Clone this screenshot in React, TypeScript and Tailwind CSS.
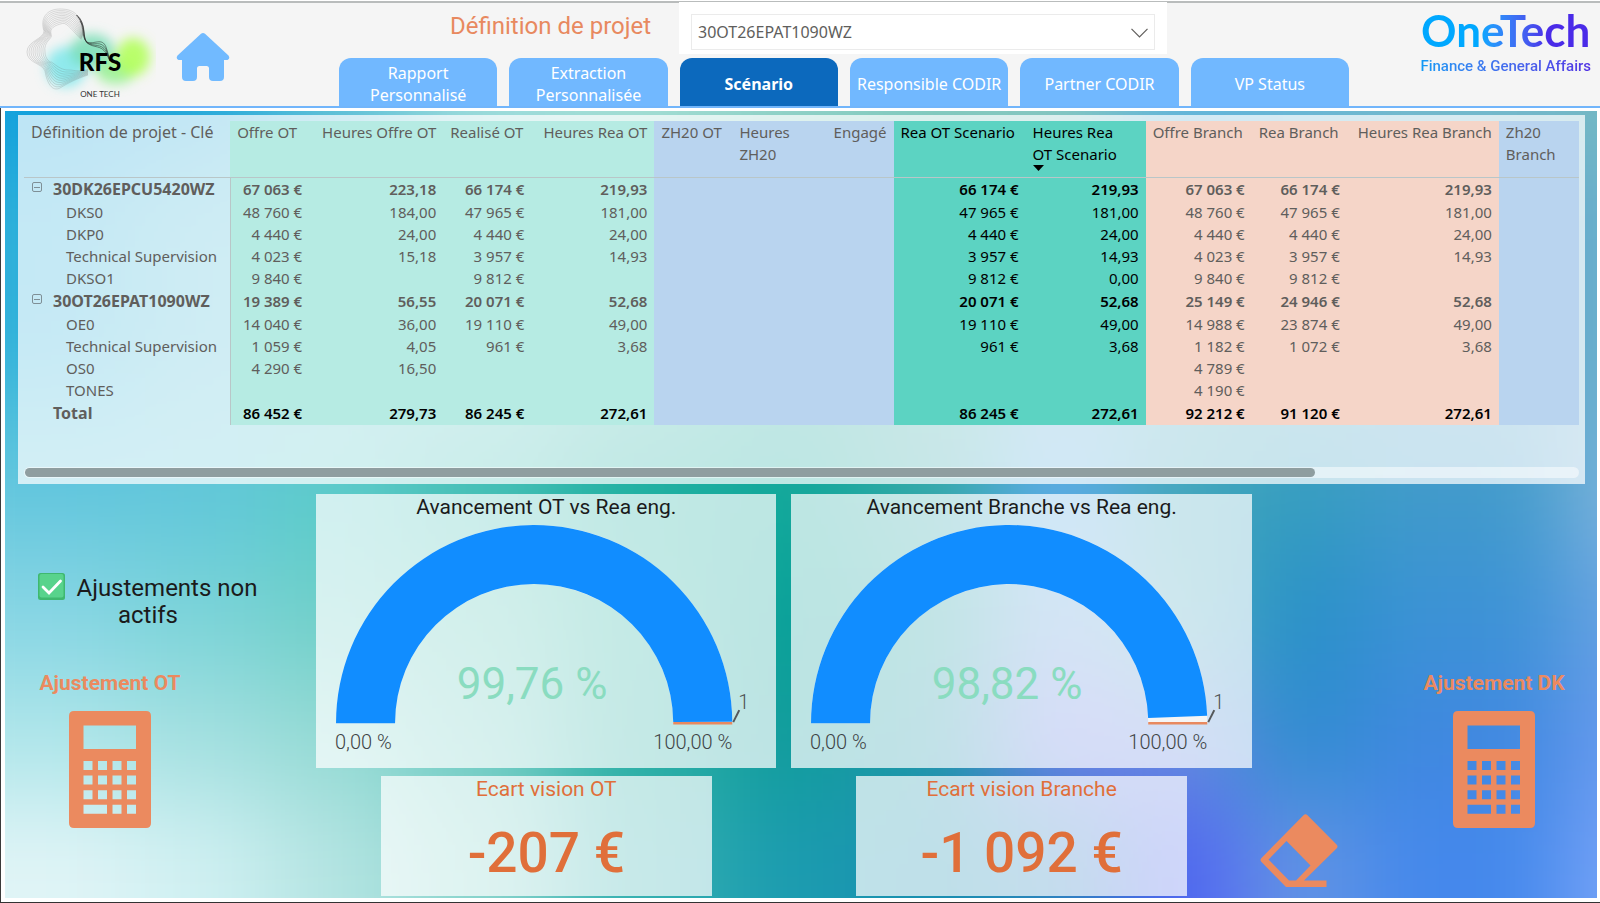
import { useState } from 'react';
import { clsx } from 'clsx';

type Tone = 'plain' | 'mint' | 'blue' | 'teal' | 'salmon';

interface Column {
  label: string;
  tone: Tone;
  col: string;
  align?: 'right';
  wrap?: boolean;
  sorted?: boolean;
}

interface Row {
  label: string;
  level: 'group' | 'item' | 'total';
  cells: string[];
}

const TABS = [
  'Rapport Personnalisé',
  'Extraction Personnalisée',
  'Scénario',
  'Responsible CODIR',
  'Partner CODIR',
  'VP Status',
];

const COLUMNS: Column[] = [
  { label: 'Définition de projet - Clé', tone: 'plain', col: 'w-[206px]' },
  { label: 'Offre OT', tone: 'mint', col: 'w-[79px]' },
  { label: 'Heures Offre OT', tone: 'mint', col: 'w-[134px]', align: 'right' },
  { label: 'Realisé OT', tone: 'mint', col: 'w-[88px]' },
  { label: 'Heures Rea OT', tone: 'mint', col: 'w-[123px]', align: 'right' },
  { label: 'ZH20 OT', tone: 'blue', col: 'w-[78px]' },
  { label: 'Heures ZH20', tone: 'blue', col: 'w-[91px]', wrap: true },
  { label: 'Engagé', tone: 'blue', col: 'w-[70px]', align: 'right' },
  { label: 'Rea OT Scenario', tone: 'teal', col: 'w-[132px]' },
  { label: 'Heures Rea OT Scenario', tone: 'teal', col: 'w-[120px]', wrap: true, sorted: true },
  { label: 'Offre Branch', tone: 'salmon', col: 'w-[106px]' },
  { label: 'Rea Branch', tone: 'salmon', col: 'w-[95px]' },
  { label: 'Heures Rea Branch', tone: 'salmon', col: 'w-[152px]', align: 'right' },
  { label: 'Zh20 Branch', tone: 'blue', col: 'w-[80px]', wrap: true },
];

const ROWS: Row[] = [
  {
    label: '30DK26EPCU5420WZ',
    level: 'group',
    cells: ['67 063 €', '223,18', '66 174 €', '219,93', '', '', '', '66 174 €', '219,93', '67 063 €', '66 174 €', '219,93', ''],
  },
  {
    label: 'DKS0',
    level: 'item',
    cells: ['48 760 €', '184,00', '47 965 €', '181,00', '', '', '', '47 965 €', '181,00', '48 760 €', '47 965 €', '181,00', ''],
  },
  {
    label: 'DKP0',
    level: 'item',
    cells: ['4 440 €', '24,00', '4 440 €', '24,00', '', '', '', '4 440 €', '24,00', '4 440 €', '4 440 €', '24,00', ''],
  },
  {
    label: 'Technical Supervision',
    level: 'item',
    cells: ['4 023 €', '15,18', '3 957 €', '14,93', '', '', '', '3 957 €', '14,93', '4 023 €', '3 957 €', '14,93', ''],
  },
  {
    label: 'DKSO1',
    level: 'item',
    cells: ['9 840 €', '', '9 812 €', '', '', '', '', '9 812 €', '0,00', '9 840 €', '9 812 €', '', ''],
  },
  {
    label: '30OT26EPAT1090WZ',
    level: 'group',
    cells: ['19 389 €', '56,55', '20 071 €', '52,68', '', '', '', '20 071 €', '52,68', '25 149 €', '24 946 €', '52,68', ''],
  },
  {
    label: 'OE0',
    level: 'item',
    cells: ['14 040 €', '36,00', '19 110 €', '49,00', '', '', '', '19 110 €', '49,00', '14 988 €', '23 874 €', '49,00', ''],
  },
  {
    label: 'Technical Supervision',
    level: 'item',
    cells: ['1 059 €', '4,05', '961 €', '3,68', '', '', '', '961 €', '3,68', '1 182 €', '1 072 €', '3,68', ''],
  },
  {
    label: 'OS0',
    level: 'item',
    cells: ['4 290 €', '16,50', '', '', '', '', '', '', '', '4 789 €', '', '', ''],
  },
  {
    label: 'TONES',
    level: 'item',
    cells: ['', '', '', '', '', '', '', '', '', '4 190 €', '', '', ''],
  },
  {
    label: 'Total',
    level: 'total',
    cells: ['86 452 €', '279,73', '86 245 €', '272,61', '', '', '', '86 245 €', '272,61', '92 212 €', '91 120 €', '272,61', ''],
  },
];

const TONE_BG: Record<Tone, string> = {
  plain: '',
  mint: 'bg-[#b6ebe3]',
  blue: 'bg-[#b9d4ef]',
  teal: 'bg-[#5cd3c2]',
  salmon: 'bg-[#f5d5c8]',
};

// Colour mesh of the canvas: one row per band, blurred into each other.
const MESH_X = [-100, 130, 270, 410, 560, 715, 860, 995, 1120, 1235, 1360, 1570, 1750];
const MESH_Y = [-100, 160, 380, 460, 560, 680, 800, 1050];
const MESH = [
  '109fdc 20a6da 60c0d8 a4dede b0e2d8 a0d6cc 90cec2 8ccabe 66b6e0 70bad8 78bccc 74b8c0',
  '2eb0da 50bcd8 60c4d4 70cccc 50c0b8 30b4a8 30b0a8 60b4c8 40aac0 48a4c4 58a8cc 70b0cc',
  '50c0dc 60c4d8 60c8ce 50c4bc 30b4a8 18a89c 40aca8 64aee0 50aec0 40a4c0 48a0c8 7cb6d4',
  '68c8de 62c8da 5accc8 40bdb4 1cafa0 10a89a 30a8a8 5aacec 40a6b8 349cc0 4099cc 84b6e0',
  '88d6e4 7cd4d8 70cfc8 60c8b8 2cb4a4 08a098 20a0a0 6aa0e0 50b0bc 2890c8 3c92d6 6ca4e4',
  'b0e6ea a4e0e0 94dad4 70ccc4 2cb0a4 109c9c 2098a8 7480ec 6c8ce0 308cd0 4088e0 6c9cf0',
  'e0f4f6 d0f0f2 b4e4e2 88d4cc 34b0b0 1c9cb0 1890b0 2c84bc 5060f4 6494e4 4488ec 7ca6f8',
].map((line) => line.split(' '));

function Backdrop() {
  return (
    <svg
      className="absolute inset-0 h-full w-full"
      viewBox="5 111 1592 787"
      preserveAspectRatio="none"
      aria-hidden="true"
    >
      <defs>
        <filter
          id="mesh"
          filterUnits="userSpaceOnUse"
          x="-100"
          y="-100"
          width="1850"
          height="1150"
          colorInterpolationFilters="sRGB"
        >
          <feGaussianBlur stdDeviation="48" />
        </filter>
      </defs>
      <g filter="url(#mesh)">
        {MESH.map((line, r) =>
          line.map((color, c) => (
            <rect
              key={`${r}-${c}`}
              x={MESH_X[c]}
              y={MESH_Y[r]}
              width={MESH_X[c + 1] - MESH_X[c] + 1}
              height={MESH_Y[r + 1] - MESH_Y[r] + 1}
              fill={`#${color}`}
            />
          )),
        )}
      </g>
    </svg>
  );
}

const CONTOUR_STEPS = [0, 1, 2, 3, 4, 5, 6, 7, 8, 9];

function RfsLogo() {
  return (
    <svg className="h-[100px] w-[136px] shrink-0" viewBox="20 4 136 100" role="img" aria-label="RFS One Tech">
      <defs>
        <filter id="glow" x="-50%" y="-50%" width="200%" height="200%">
          <feGaussianBlur stdDeviation="6" />
        </filter>
      </defs>
      <g filter="url(#glow)">
        <ellipse cx="66" cy="68" rx="20" ry="20" fill="#6fe6ea" opacity="0.75" />
        <ellipse cx="92" cy="52" rx="22" ry="17" fill="#6fdcb0" opacity="0.8" />
        <ellipse cx="116" cy="72" rx="20" ry="13" fill="#8ff08a" opacity="0.8" />
        <ellipse cx="133" cy="58" rx="17" ry="19" fill="#b4ff5c" opacity="0.9" />
      </g>
      <g fill="none" stroke="#666" strokeWidth="0.3" opacity="0.7">
        {CONTOUR_STEPS.map((i) => (
          <path
            key={i}
            d={`M${83 - i * 0.2} ${36 + i * 0.5}
              C${82 - i} ${18 + i * 1.6} ${76 - i} ${10 + i * 1.5} ${60 + i * 0.3} ${10 + i * 1.6}
              C${46 + i} ${10 + i * 1.8} ${40 + i} ${20 + i} ${44 + i * 0.8} ${32 + i * 0.4}
              C${44 + i} ${40} ${27 + i * 1.8} ${42} ${27 + i * 2} ${53}
              C${27 + i * 2} ${64 - i * 0.4} ${42 + i} ${64} ${45 + i * 0.7} ${72 - i}
              C${47 + i} ${84 - i * 2} ${52 + i} ${93 - i * 2.4} ${60 + i} ${89 - i * 2}
              C${68 + i} ${84 - i * 1.4} ${76} ${80 - i * 0.8} ${88} ${76 - i * 0.6}`}
          />
        ))}
      </g>
      <g fill="none" stroke="#222" strokeWidth="0.5">
        <path d="M76 16C86 24 80 38 87 43C94 46 102 38 106 48C108 54 109 58 110 62" />
        <path d="M77 16C87 25 81 38 87 43.500C94 47 101 41 106 50C108 55 109 58 110 62" />
        <path d="M78 18C87 27 82 38 87 44C94 48 101 44 106 52L110 62" />
        <path d="M80 22C86 30 82 39 88 44.500C94 49 101 46 106 54L110 62" />
      </g>
      <text x="100" y="72" textAnchor="middle" fontFamily="Lato, sans-serif" fontSize="24" fontWeight="900" fill="#000">
        RFS
      </text>
      <text x="100" y="98" textAnchor="middle" fontFamily="Lato, sans-serif" fontSize="8" fill="#333">
        ONE TECH
      </text>
    </svg>
  );
}

function HomeIcon() {
  return (
    <svg className="h-[48px] w-[54px]" viewBox="0 0 54 48" fill="#71baff" aria-hidden="true">
      <path d="M25 .8Q27 -.6 29 .8L52.500 22.500Q54.500 25.500 51.500 27H48V44Q48 48 44 48H37Q33 48 33 44V35.500Q33 33 30.500 33H23.500Q21 33 21 35.500V44Q21 48 17 48H10Q6 48 6 44V27H2.500Q-.5 25.500 1.500 22.500Z" />
    </svg>
  );
}

function Header() {
  const [tab, setTab] = useState('Scénario');

  return (
    <header className="mt-px flex h-[107px] shrink-0 items-stretch border-t-2 border-b-2 border-t-[#b9bcbc] border-b-[#71b5fb] bg-[#f5f5f5]">
      <div className="flex w-[339px] shrink-0 items-start pl-5">
        <RfsLogo />
        <a href="#accueil" aria-label="Accueil" className="mt-[30px] ml-5">
          <HomeIcon />
        </a>
      </div>

      <div className="-mt-px flex min-w-0 flex-[1010] flex-col justify-between">
        <div className="flex h-[52px] items-start pl-[111px]">
          <label
            htmlFor="project"
            className="w-[229px] shrink-0 pt-2 font-['Roboto',sans-serif] text-2xl leading-8 text-[#e8895f]"
          >
            Définition de projet
          </label>
          <div className="h-[52px] w-[488px] shrink-0 bg-white px-3 py-3">
            <div className="relative">
              <select
                id="project"
                className="h-[36px] w-full appearance-none border border-[#ebebeb] bg-white px-[6px] text-base text-[#605e5c]"
              >
                <option>30OT26EPAT1090WZ</option>
                <option>30DK26EPCU5420WZ</option>
              </select>
              <svg
                className="pointer-events-none absolute top-[14px] right-[7px] h-[10px] w-[17px]"
                viewBox="0 0 17 10"
                fill="none"
                stroke="#605e5c"
                strokeWidth="1.2"
                aria-hidden="true"
              >
                <path d="M.5 .8L8.500 9L16.500 .8" />
              </svg>
            </div>
          </div>
        </div>

        <nav className="grid grid-cols-6 gap-3">
          {TABS.map((name) => (
            <button
              key={name}
              type="button"
              onClick={() => setTab(name)}
              className={clsx(
                'flex h-12 items-center justify-center rounded-t-xl pt-1 text-center text-base leading-[22px] text-white',
                name.includes('Personnalis') ? 'px-6' : 'whitespace-nowrap',
                name === tab ? 'bg-[#0c69bd] font-bold' : 'bg-[#71b8ff]',
              )}
            >
              {name}
            </button>
          ))}
        </nav>
      </div>

      <div className="flex min-w-0 flex-[251] justify-end">
        <div className="mr-[9px] flex flex-col items-center pt-px">
          <span className="bg-linear-to-r from-[#00a8ff] from-35% to-[#4a2be8] to-75% bg-clip-text font-['Lato',sans-serif] text-[44px] leading-[53px] font-bold text-transparent">
            OneTech
          </span>
          <span className="bg-linear-to-r from-[#0f9af5] to-[#5130e4] bg-clip-text font-['Roboto',sans-serif] text-[15px] leading-[18px] font-medium text-transparent">
            Finance &amp; General Affairs
          </span>
        </div>
      </div>
    </header>
  );
}

function ScenarioTable() {
  return (
    <section className="bg-white/72 px-[6px] pt-[6px] pb-[6px]">
      <table className="w-full table-fixed border-collapse text-[15px] text-[#605e5c]">
        <colgroup>
          {COLUMNS.map((c) => (
            <col key={c.label} className={c.col} />
          ))}
        </colgroup>
        <thead>
          <tr className="h-[56px] border-b border-[#b9c6c8] align-top leading-[22px]">
            {COLUMNS.map((c) => (
              <th
                key={c.label}
                scope="col"
                className={clsx(
                  'pl-[7px] font-normal',
                  c.sorted ? 'pr-4' : 'pr-[7px]',
                  TONE_BG[c.tone],
                  c.align === 'right' ? 'text-right' : 'text-left',
                  c.tone === 'teal' && 'text-black',
                  c.tone === 'plain' && 'text-base leading-[22px]',
                  !c.wrap && 'whitespace-nowrap',
                )}
              >
                {c.label}
                {c.sorted ? (
                  <svg className="block h-[6px] w-[11px]" viewBox="0 0 11 6" aria-hidden="true">
                    <path d="M0 0H11L5.500 6Z" fill="#000" />
                  </svg>
                ) : null}
              </th>
            ))}
          </tr>
        </thead>
        <tbody>
          {ROWS.map((row, i) => (
            <tr key={i} className={clsx('leading-[22px]', row.level === 'item' ? 'h-[22px]' : 'h-6')}>
              <th
                scope="row"
                className={clsx(
                  'border-r border-[#b9c6c8] text-left whitespace-nowrap',
                  row.level === 'item' ? 'pl-[42px] font-normal' : 'text-base leading-[22px] font-bold',
                  row.level === 'total' && 'pl-[29px]',
                )}
              >
                {row.level === 'group' ? (
                  <span className="flex items-center pl-2">
                    <button
                      type="button"
                      aria-label={`Réduire ${row.label}`}
                      className="mr-[11px] mb-1 flex h-[10px] w-[10px] items-center justify-center rounded-xs border border-[#7f8f96]"
                    >
                      <span className="h-px w-[6px] bg-[#7f8f96]" />
                    </button>
                    {row.label}
                  </span>
                ) : (
                  row.label
                )}
              </th>
              {row.cells.map((cell, c) => {
                const { tone } = COLUMNS[c + 1];
                return (
                  <td
                    key={c}
                    className={clsx(
                      'px-[7px] text-right whitespace-nowrap',
                      TONE_BG[tone],
                      row.level !== 'item' && 'font-semibold',
                      (tone === 'teal' || row.level === 'total') && 'text-black',
                    )}
                  >
                    {cell}
                  </td>
                );
              })}
            </tr>
          ))}
        </tbody>
      </table>
      <div className="mt-[42px] flex h-[11px] items-center rounded-full bg-white/50 pl-px">
        <div className="h-[9px] w-[83%] rounded-full bg-[#8f9ea0]" />
      </div>
    </section>
  );
}

const CX = 218;
const CY = 203;
const OUTER = 198;
const INNER = 139;

function arc(from: number, to: number): string {
  const pt = (r: number, t: number) => `${CX - r * Math.cos(Math.PI * t)} ${CY - r * Math.sin(Math.PI * t)}`;
  return `M${pt(OUTER, from)}A${OUTER} ${OUTER} 0 0 1 ${pt(OUTER, to)}L${pt(INNER, to)}A${INNER} ${INNER} 0 0 0 ${pt(INNER, from)}Z`;
}

function GaugeCard({ title, value, label }: { title: string; value: number; label: string }) {
  return (
    <section className="bg-white/72 font-['Roboto',sans-serif]">
      <h2 className="h-[26px] text-center text-[21px] leading-[26px] text-[#1b1b1b]">{title}</h2>
      <svg className="block w-full" viewBox="0 0 460 248" role="img" aria-label={`${title} ${label}`}>
        <path d={arc(0, 1)} fill="#f5f5f5" />
        <path d={arc(0, value)} fill="#118dff" />
        <path d={`M${CX + INNER} ${CY}H${CX + OUTER}`} stroke="#e8895f" strokeWidth="2.5" />
        <path d="M417 202L423 190" stroke="#55585a" strokeWidth="2" />
        <text x="422" y="189" fontSize="20" fontWeight="300" fill="#4d5052">
          1
        </text>
        <text x={CX - 2} y="179" textAnchor="middle" fontSize="44" fill="#8adcc0">
          {label}
        </text>
        <text x="19" y="229" fontSize="20" fontWeight="300" fill="#3f4446">
          0,00 %
        </text>
        <text x="416" y="229" textAnchor="end" fontSize="20" fontWeight="300" fill="#3f4446">
          100,00 %
        </text>
      </svg>
    </section>
  );
}

function DeltaCard({ title, value }: { title: string; value: string }) {
  return (
    <section className="mx-[14%] h-[120px] bg-white/72 text-center font-['Roboto',sans-serif] text-[#e06f3a]">
      <h2 className="text-[21px] leading-[26px]">{title}</h2>
      <p className="pt-4 text-[55px] leading-[70px] font-medium">{value}</p>
    </section>
  );
}

function CalculatorIcon() {
  const keys = [0, 1, 2, 3].flatMap((r) => [0, 1, 2, 3].map((c) => [r, c]));
  const holes = keys
    .filter(([r, c]) => !(r === 3 && c < 2))
    .map(([r, c]) => `M${14.5 + c * 14.5} ${50 + r * 14.6}v9h9v-9z`)
    .join('');
  return (
    <svg className="h-[117px] w-[82px]" viewBox="0 0 82 117" aria-hidden="true">
      <path
        fill="#eb8a5f"
        fillRule="evenodd"
        d={`M5 0H77Q82 0 82 5V112Q82 117 77 117H5Q0 117 0 112V5Q0 0 5 0ZM14.500 14.500V38H67V14.500ZM14.500 93.800v9h23.500v-9z${holes}`}
      />
    </svg>
  );
}

function AdjustButton({ label }: { label: string }) {
  return (
    <button type="button" className="flex flex-col items-center font-['Roboto',sans-serif] text-[21px] leading-6 font-bold text-[#eb8a5f]">
      {label}
      <span className="mt-4">
        <CalculatorIcon />
      </span>
    </button>
  );
}

function CheckMark() {
  return (
    <svg className="mr-[11px] inline h-[27px] w-[27px] align-[-4px]" viewBox="0 0 27 27" aria-hidden="true">
      <rect width="27" height="27" rx="2.5" fill="#3fb86f" />
      <rect x="1.500" y="1" width="24" height="23.500" rx="2" fill="#58d38c" />
      <path d="M5 14L11 20L22.500 8" fill="none" stroke="#fff" strokeWidth="2.800" strokeLinecap="round" />
    </svg>
  );
}

export default function App() {
  return (
    <div className="flex min-h-screen flex-col border-b border-[#333] bg-white font-['Noto_Sans',sans-serif]">
      <Header />
      <div className="flex flex-1 border-l border-[#3a3a3a] pt-[3px] pr-[3px] pb-1 pl-1">
        <main className="relative flex-1">
          <Backdrop />
          <div className="relative flex flex-col gap-[10px] pt-1 pr-3 pb-[2px] pl-[13px]">
            <ScenarioTable />

            <div className="grid grid-cols-[298fr_935fr_333fr]">
              <aside className="flex flex-col items-start pt-[79px]">
                <p className="w-[260px] text-center font-['Roboto',sans-serif] text-2xl leading-[27px] text-[#1b1b1b]">
                  <CheckMark />
                  Ajustements non
                  <br />
                  actifs
                </p>
                <div className="mt-[42px] flex w-[184px] justify-center">
                  <AdjustButton label="Ajustement OT" />
                </div>
              </aside>

              <div className="grid grid-cols-2 gap-x-[15px] gap-y-2">
                <GaugeCard title="Avancement OT vs Rea eng." value={0.9976} label="99,76 %" />
                <GaugeCard title="Avancement Branche vs Rea eng." value={0.9882} label="98,82 %" />
                <DeltaCard title="Ecart vision OT" value="-207 €" />
                <DeltaCard title="Ecart vision Branche" value="-1 092 €" />
              </div>

              <aside className="flex items-stretch justify-between pl-2">
                <button type="button" aria-label="Effacer les filtres" className="mb-[9px] self-end">
                  <svg className="h-[73px] w-[79px]" viewBox="0 0 79 73" fill="#eb8a5f" aria-hidden="true">
                    <path
                      fillRule="evenodd"
                      d="M43.500 1.300Q45.500 -.7 47.500 1.300L76.500 30.500Q78.500 32.500 76.500 34.500L44 66.500H66.500V73H26L1.500 48Q-.5 46 1.500 44ZM26.500 27L8.500 45.500L29 66.500H36L50.500 51.500Z"
                    />
                  </svg>
                </button>
                <div className="flex w-[182px] justify-center self-start pt-[177px]">
                  <AdjustButton label="Ajustement DK" />
                </div>
              </aside>
            </div>
          </div>
        </main>
      </div>
    </div>
  );
}
